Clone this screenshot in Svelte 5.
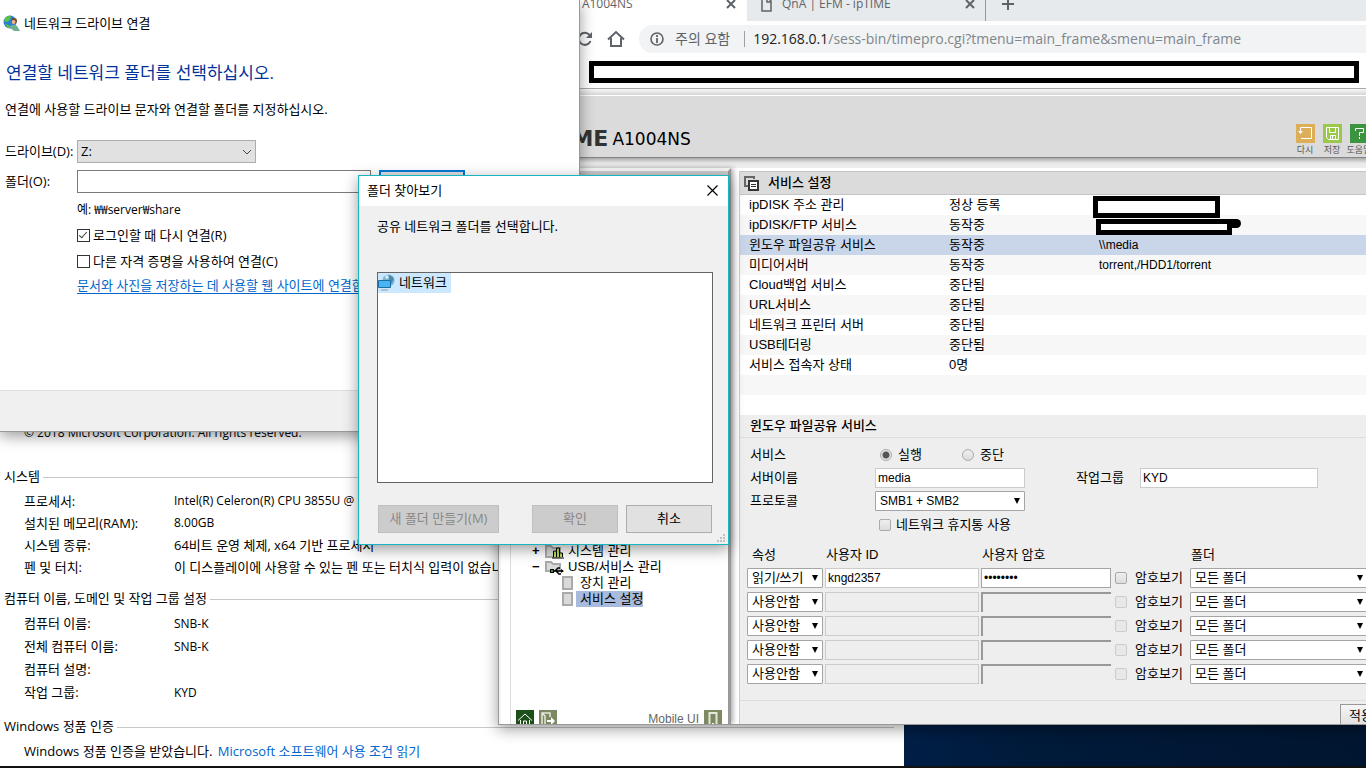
<script lang="ts">
    const systemRows = [
        { label: '프로세서:', value: 'Intel(R) Celeron(R) CPU 3855U @ 1.60GHz', latin: true },
        { label: '설치된 메모리(RAM):', value: '8.00GB', latin: true },
        { label: '시스템 종류:', value: '64비트 운영 체제, x64 기반 프로세서' },
        { label: '펜 및 터치:', value: '이 디스플레이에 사용할 수 있는 펜 또는 터치식 입력이 없습니다.' }
    ];

    const nameRows = [
        { label: '컴퓨터 이름:', value: 'SNB-K' },
        { label: '전체 컴퓨터 이름:', value: 'SNB-K' },
        { label: '컴퓨터 설명:', value: '' },
        { label: '작업 그룹:', value: 'KYD' }
    ];

    const services = [
        { name: 'ipDISK 주소 관리', state: '정상 등록', info: '', mask: 'big' },
        { name: 'ipDISK/FTP 서비스', state: '동작중', info: '', mask: 'small' },
        { name: '윈도우 파일공유 서비스', state: '동작중', info: '\\\\media' },
        { name: '미디어서버', state: '동작중', info: 'torrent,/HDD1/torrent' },
        { name: 'Cloud백업 서비스', state: '중단됨', info: '' },
        { name: 'URL서비스', state: '중단됨', info: '' },
        { name: '네트워크 프린터 서버', state: '중단됨', info: '' },
        { name: 'USB테더링', state: '중단됨', info: '' },
        { name: '서비스 접속자 상태', state: '0명', info: '' },
        { name: '', state: '', info: '' },
        { name: '', state: '', info: '' }
    ];

    const users = [
        { mode: '읽기/쓰기', id: 'kngd2357', pw: 'password' },
        { mode: '사용안함', id: '', pw: '' },
        { mode: '사용안함', id: '', pw: '' },
        { mode: '사용안함', id: '', pw: '' },
        { mode: '사용안함', id: '', pw: '' }
    ];

    let selected = 2;
</script>

<div class="desktop">
    <!-- system information -->
    <section class="window system">
        <p class="copyright">© 2018 Microsoft Corporation. All rights reserved.</p>
        <h2>시스템</h2>
        <dl>
            {#each systemRows as row}
                <div class="row">
                    <dt>{row.label}</dt>
                    <dd class:latin={row.latin}>{row.value}</dd>
                </div>
            {/each}
        </dl>
        <h2>컴퓨터 이름, 도메인 및 작업 그룹 설정</h2>
        <dl class="names">
            {#each nameRows as row}
                <div class="row">
                    <dt>{row.label}</dt>
                    <dd class="latin">{row.value}</dd>
                </div>
            {/each}
        </dl>
        <h2>Windows 정품 인증</h2>
        <p class="activation">Windows 정품 인증을 받았습니다. <a href="#license">Microsoft 소프트웨어 사용 조건 읽기</a></p>
    </section>

    <!-- browser with router page -->
    <section class="window browser">
        <div class="tabs">
            <div class="tab active">
                <span>ipTIME A1004NS</span>
                <button class="icon" aria-label="탭 닫기">
                    <svg width="10" height="10" viewBox="0 0 10 10"><path d="M1 1l8 8M9 1l-8 8" stroke="#5f6368" stroke-width="2" /></svg>
                </button>
            </div>
            <div class="tab other">
                <svg width="11" height="15" viewBox="0 0 11 15"><path d="M1 1h6l3 3v10H1zM6 1v4h4" fill="none" stroke="#5f6368" stroke-width="1.5" /></svg>
                <span>QnA | EFM - ipTIME</span>
                <button class="icon" aria-label="탭 닫기">
                    <svg width="10" height="10" viewBox="0 0 10 10"><path d="M1 1l8 8M9 1l-8 8" stroke="#5f6368" stroke-width="2" /></svg>
                </button>
            </div>
            <button class="icon new" aria-label="새 탭">
                <svg width="12" height="12" viewBox="0 0 12 12"><path d="M6 0v12M0 6h12" stroke="#5f6368" stroke-width="2" /></svg>
            </button>
        </div>
        <div class="toolbar">
            <button class="icon" aria-label="새로고침">
                <svg width="16" height="16" viewBox="0 0 16 16"><path d="M13.5 10A6 6 0 1 1 12.5 4" fill="none" stroke="#5f6368" stroke-width="2" /><path d="M15 1v6H9z" fill="#5f6368" /></svg>
            </button>
            <button class="icon" aria-label="홈">
                <svg width="18" height="18" viewBox="0 0 18 18"><path d="M1 9.500L9 2l8 7.500M4 8v8h10V8" fill="none" stroke="#5f6368" stroke-width="2" /></svg>
            </button>
            <div class="address">
                <svg width="14" height="14" viewBox="0 0 14 14"><circle cx="7" cy="7" r="6" fill="none" stroke="#5f6368" stroke-width="1.600" /><path d="M7 6v5M7 3v2" stroke="#5f6368" stroke-width="1.800" /></svg>
                <span class="warn">주의 요함</span>
                <span class="bar"></span>
                <span class="url"><b>192.168.0.1</b>/sess-bin/timepro.cgi?tmenu=main_frame&amp;smenu=main_frame</span>
            </div>
        </div>
        <div class="bookmarks"><div class="redacted"></div></div>

        <header class="banner">
            <div class="logo"><strong>ipTIME</strong><span>A1004NS</span></div>
            <nav class="tools">
                <button>
                    <svg width="19" height="19" viewBox="0 0 19 19"><path fill="#dcae58" d="M0 0h19v19H0z" /><path d="M4.500 7.500V3.500H15.500V14.500H5" fill="none" stroke="#fff" /><path d="M2 7h5l-2.500 3z" fill="#fff" /></svg>
                    다시
                </button>
                <button>
                    <svg width="19" height="19" viewBox="0 0 19 19"><path fill="#9ac84a" d="M0 0h19v19H0z" /><path d="M3.500 3.500h12v12h-10l-2-2zM6.500 3.500v5h6v-5M7.500 15.500v-4h5v4M9.500 12v3" fill="none" stroke="#fff" /></svg>
                    저장
                </button>
                <button>
                    <svg width="19" height="19" viewBox="0 0 19 19"><path fill="#3c9440" d="M0 0h19v19H0z" /><path d="M5.500 7V4.500h8v4h-4V12M9.500 13v2" fill="none" stroke="#fff" /></svg>
                    도움말
                </button>
            </nav>
        </header>

        <div class="frames">
            <aside>
                <ul class="tree">
                    <li>
                        <span class="sign">+</span>
                        <svg width="19" height="15" viewBox="0 0 19 15"><path d="M1 13V2h5l2 2h7v9z" fill="#dadada" stroke="#aaa" stroke-width="2" /><path d="M8.500 13V7h3v6M11.500 13V4h3v9M14.500 13V9h3v4M7 14h12" fill="#b8dc50" stroke="#000" /></svg>
                        <a href="#system">시스템 관리</a>
                    </li>
                    <li>
                        <span class="sign">−</span>
                        <svg width="19" height="15" viewBox="0 0 19 15"><path d="M1 11V2h5l2 2h7v7z" fill="#dadada" stroke="#aaa" stroke-width="2" /><path d="M5 9h4v4H5z" fill="#000" /><path d="M6 10h2v2H6z" fill="#3c9440" /><path d="M8 11h10M10 11l3-3h2M11 11l3 3h2" stroke="#000" stroke-width="1.500" fill="none" /><path d="M16 9v4l3-2z" /></svg>
                        <a href="#usb">USB/서비스 관리</a>
                    </li>
                    <li class="child">
                        <svg width="11" height="14" viewBox="0 0 11 14"><path d="M1 1h9v12H1z" fill="#dadada" stroke="#aaa" stroke-width="2" /></svg>
                        <a href="#device">장치 관리</a>
                    </li>
                    <li class="child">
                        <svg width="11" height="14" viewBox="0 0 11 14"><path d="M1 1h9v12H1z" fill="#dadada" stroke="#aaa" stroke-width="2" /></svg>
                        <a href="#service" class="current">서비스 설정</a>
                    </li>
                </ul>
                <div class="side-foot">
                    <svg width="18" height="18" viewBox="0 0 18 18"><path fill="#1c5018" d="M0 0h18v18H0z" /><path d="M2 10.500L9 4l7 6.500M4.500 10v7M13.500 10v7M7.500 17v-6h3v6" fill="none" stroke="#fff" /></svg>
                    <svg width="18" height="18" viewBox="0 0 18 18"><path fill="#7d8963" d="M0 0h18v18H0z" /><path d="M11 7V3H3v11l3 3V6L3 3" fill="none" stroke="#e4e8d8" stroke-width="1.500" /><path d="M8 10h4V7l4 4-4 4v-3H8z" fill="#fff" /></svg>
                    <a href="#mobile">Mobile UI</a>
                    <svg width="18" height="18" viewBox="0 0 18 18"><path fill="#7d8963" d="M0 0h18v18H0z" /><path d="M5.500 3h7v13h-7z" fill="none" stroke="#e4e8d8" stroke-width="2" /><path d="M8 13h2v2H8z" fill="#fff" /></svg>
                </div>
            </aside>

            <main>
                <h1>
                    <svg width="15" height="15" viewBox="0 0 15 15"><path d="M4 10H1V1h9v2" fill="none" stroke="#666" stroke-width="2" /><path d="M5 5h9v9H5z" fill="#fff" stroke="#333" stroke-width="2" /><path d="M7 8.500h5M7 10.500h5" stroke="#333" /></svg>
                    서비스 설정
                </h1>
                <table class="services">
                    <tbody>
                        {#each services as service, i}
                            <tr class:selected={i === selected} on:click={() => (selected = i)}>
                                <td class="name">{service.name}</td>
                                <td class="state">{service.state}</td>
                                <td class="info">
                                    {service.info}
                                    {#if service.mask}<span class="mask {service.mask}"></span>{/if}
                                </td>
                            </tr>
                        {/each}
                    </tbody>
                </table>

                <h3>윈도우 파일공유 서비스</h3>
                <form class="settings">
                    <div class="line radios">
                        <span class="key">서비스</span>
                        <label><input type="radio" name="run" checked />실행</label>
                        <label><input type="radio" name="run" />중단</label>
                    </div>
                    <div class="line">
                        <label class="key" for="server">서버이름</label>
                        <input id="server" class="text server" value="media" />
                        <label class="group-key" for="group">작업그룹</label>
                        <input id="group" class="text group" value="KYD" />
                    </div>
                    <div class="line">
                        <label class="key" for="proto">프로토콜</label>
                        <span class="select proto">
                            <select id="proto"><option>SMB1 + SMB2</option></select>
                        </span>
                    </div>
                    <div class="line trash">
                        <label><input type="checkbox" />네트워크 휴지통 사용</label>
                    </div>
                </form>

                <table class="users">
                    <thead>
                        <tr>
                            <th class="c-mode">속성</th>
                            <th class="c-id">사용자 ID</th>
                            <th class="c-pw">사용자 암호</th>
                            <th class="c-show"></th>
                            <th class="c-folder">폴더</th>
                        </tr>
                    </thead>
                    <tbody>
                        {#each users as user}
                            <tr>
                                <td><span class="select mode"><select aria-label="속성"><option>{user.mode}</option></select></span></td>
                                <td><input class="text uid" aria-label="사용자 ID" value={user.id} disabled={!user.id} /></td>
                                <td><input class="text pw" type="password" aria-label="사용자 암호" value={user.pw} disabled={!user.id} /></td>
                                <td><label class="show"><input type="checkbox" disabled={!user.id} />암호보기</label></td>
                                <td><span class="select folder"><select aria-label="폴더"><option>모든 폴더</option></select></span></td>
                            </tr>
                        {/each}
                    </tbody>
                </table>
                <div class="apply"><button>적용</button></div>
            </main>
        </div>
    </section>

    <!-- map network drive -->
    <section class="window drive">
        <div class="drive-title">
            <svg width="17" height="17" viewBox="0 0 17 17">
                <circle cx="7" cy="7" r="6.500" fill="#2a7fd4" />
                <path d="M2 3q3-3 6-2l-1 4-3 2-3-1zM2 9l4 1 1 3-2 0z" fill="#5cc04a" />
                <circle cx="11" cy="6" r="3" fill="#7a4a2a" /><circle cx="10.500" cy="7" r="2" fill="#e8b890" />
                <path d="M6 12q4-4 8-1l3 5h-6z" fill="#6fae90" />
            </svg>
            <span>네트워크 드라이브 연결</span>
        </div>
        <h1>연결할 네트워크 폴더를 선택하십시오.</h1>
        <p>연결에 사용할 드라이브 문자와 연결할 폴더를 지정하십시오.</p>
        <div class="field">
            <label for="letter">드라이브(D):</label>
            <span class="letter">
                <select id="letter"><option>Z:</option></select>
                <svg width="10" height="6" viewBox="0 0 10 6"><path d="M1 1l4 4 4-4" fill="none" stroke="#444" /></svg>
            </span>
        </div>
        <div class="field">
            <label for="folder">폴더(O):</label>
            <input id="folder" class="path" />
            <button class="browse" aria-label="찾아보기"></button>
        </div>
        <div class="options">
            <span class="sample">예: ₩₩server₩share</span>
            <label><input type="checkbox" checked />로그인할 때 다시 연결(R)</label>
            <label><input type="checkbox" />다른 자격 증명을 사용하여 연결(C)</label>
            <a href="#website">문서와 사진을 저장하는 데 사용할 웹 사이트에 연결합니다.</a>
        </div>
        <footer></footer>
    </section>

    <!-- browse for folder -->
    <section class="window dialog">
        <div class="dialog-title">
            <span>폴더 찾아보기</span>
            <button class="icon" aria-label="닫기">
                <svg width="11" height="11" viewBox="0 0 11 11"><path d="M.5 .5l10 10M10.500 .5l-10 10" stroke="#000" stroke-width="1.200" /></svg>
            </button>
        </div>
        <p>공유 네트워크 폴더를 선택합니다.</p>
        <div class="folders">
            <button class="node">
                <svg width="17" height="17" viewBox="0 0 17 17">
                    <circle cx="10.500" cy="6.500" r="6" fill="#7fb4d0" /><path d="M9 1q5 0 7 4l-3 5-3-2 1-3z" fill="#4a8cae" /><path d="M7 2l3-1 1 3-3 1z" fill="#d5ebf2" />
                    <path d="M.5 6.500h12v7H.5z" fill="#48b4f4" stroke="#1d6fa8" /><path d="M3 16h7" stroke="#999" />
                </svg>
                네트워크
            </button>
        </div>
        <div class="buttons">
            <button class="make" disabled>새 폴더 만들기(M)</button>
            <button disabled>확인</button>
            <button>취소</button>
        </div>
        <svg class="grip" width="8" height="8" viewBox="0 0 8 8"><path d="M6 0h2v2H6zM3 3h2v2H3zM6 3h2v2H6zM0 6h2v2H0zM3 6h2v2H3zM6 6h2v2H6z" fill="#bfbfbf" /></svg>
    </section>

    <div class="taskbar"></div>
</div>

<style>
    :global(body) {
        margin: 0;
        overflow: hidden;
    }

    .desktop {
        position: relative;
        height: 100vh;
        overflow: hidden;
        background: linear-gradient(100deg, #00204a 66%, #001a3a 78%, #001630 100%);
        font: 13px/20px "Open Sans", "Noto Sans CJK KR", sans-serif;
        color: #000;
    }

    .desktop :is(h1, h2, h3, p, ul, dl, dd) {
        margin: 0;
        padding: 0;
        font-weight: 400;
        list-style: none;
    }

    .desktop :is(button, input, select) {
        box-sizing: border-box;
        margin: 0;
        font: inherit;
        color: inherit;
    }

    .window {
        position: absolute;
        box-sizing: border-box;
        display: flex;
        flex-direction: column;
        white-space: nowrap;
        overflow: hidden;
    }

    svg {
        flex: none;
        display: block;
    }

    .icon {
        display: flex;
        padding: 0;
        border: 0;
        background: none;
    }

    a {
        color: #0066cc;
        text-decoration: none;
    }

    .taskbar {
        position: absolute;
        inset: auto 0 0;
        height: 2px;
        background: #111;
    }

    /* system information */
    .system {
        left: 0;
        top: 0;
        bottom: 2px;
        width: 904px;
        padding: 0 10px 4px 4px;
        justify-content: flex-end;
        background: #fff;
        line-height: 22px;
    }

    .system .copyright {
        margin-bottom: 20px;
        padding-left: 20px;
        font-size: 12px;
    }

    .system h2 {
        display: flex;
        align-items: center;
        gap: 3px;
        height: 24px;
        margin-bottom: 2px;
        font-size: 13px;
    }

    .system h2::after {
        content: "";
        flex: 1;
        height: 1px;
        margin-top: 2px;
        background: #c8c8c8;
    }

    .system dl {
        margin-bottom: 8px;
    }

    .row {
        display: flex;
        padding-left: 20px;
    }

    .system .names {
        margin-bottom: 10px;
        line-height: 23px;
    }

    dt {
        width: 150px;
    }

    .latin {
        font-size: 12px;
    }

    .system .activation {
        padding-left: 20px;
    }

    .activation a {
        margin-left: 2px;
    }

    /* browser */
    .browser {
        left: 498px;
        right: 0;
        top: 0;
        bottom: 43px;
        border: solid #999;
        border-width: 0 0 1px 1px;
        background: #fff;
        box-shadow: 0 4px 14px rgba(0, 0, 0, 0.4);
    }

    .tabs {
        display: flex;
        align-items: center;
        height: 21px;
        flex: none;
        background: #e6eaed;
        font-size: 12px;
        color: #5f6368;
    }

    .tab {
        display: flex;
        align-items: center;
        box-sizing: border-box;
        height: 21px;
        padding-bottom: 13px;
    }

    .tab .icon {
        margin-left: auto;
    }

    .active {
        width: 248px;
        padding-left: 42px;
        padding-right: 11px;
        background: #fff;
    }

    .other {
        width: 239px;
        padding-left: 14px;
        padding-right: 10px;
        gap: 10px;
        background: #e6eaed;
        border-bottom-left-radius: 8px;
        border-right: 1px solid #999;
    }

    .tabs .new {
        margin: 0 0 13px 16px;
    }

    .toolbar {
        display: flex;
        align-items: center;
        gap: 14px;
        height: 36px;
        flex: none;
        padding-left: 78px;
    }

    .address {
        display: flex;
        align-items: center;
        flex: 1;
        height: 28px;
        padding-left: 11px;
        border-radius: 14px 0 0 14px;
        background: #f1f3f4;
        color: #80868b;
        font-size: 14px;
    }

    .warn {
        margin-left: 11px;
        color: #5f6368;
    }

    .bar {
        width: 1px;
        height: 16px;
        margin: 0 8px 0 14px;
        background: #9aa0a6;
    }

    .url b {
        font-weight: 400;
        color: #202124;
    }

    .bookmarks {
        height: 27px;
        flex: none;
        padding: 4px 7px 0 90px;
        border-bottom: 1px solid #aaa;
    }

    .redacted {
        height: 12px;
        border: 5px solid #000;
    }

    .banner {
        display: flex;
        flex: none;
        box-sizing: border-box;
        height: 69px;
        border-bottom: 1px solid #858585;
        background: linear-gradient(#f8f8f8, #d5d5d5 6px, #fff 6px, #fff 7px, #dbdbdb 7px);
        overflow: hidden;
    }

    .logo {
        display: flex;
        align-items: center;
        gap: 4px;
        padding-left: 26px;
        padding-top: 31px;
        font-family: "DejaVu Sans", sans-serif;
        font-size: 17px;
    }

    .logo strong {
        font-size: 22px;
        color: #333;
    }

    .tools {
        display: flex;
        gap: 7px;
        margin: 35px -3px 0 auto;
        color: #555;
    }

    .tools button {
        display: flex;
        flex-direction: column;
        align-items: center;
        width: 20px;
        padding: 0;
        border: 0;
        background: none;
        font-size: 9px;
        line-height: 13px;
    }

    .frames {
        display: flex;
        flex: 1;
        min-height: 0;
        padding-top: 10px;
        background: linear-gradient(#aaa, #e8e8e8 5px, #eee 10px, #fff 10px);
        font-family: "Liberation Sans", "Noto Sans CJK KR", sans-serif;
    }

    aside {
        display: flex;
        flex-direction: column;
        justify-content: flex-end;
        flex: none;
        box-sizing: border-box;
        width: 232px;
        margin-right: 8px;
        border: solid #f4f4f4;
        border-width: 3px 3px 0 2px;
        border-right-color: #999;
        padding: 0 6px 0 25px;
        background: linear-gradient(#ccc, #ccc 8px, transparent 8px), linear-gradient(90deg, #fff 9px, #ddd 9px, #ddd 10px, #fff 10px);
        box-shadow: 2px 0 5px #aaa;
    }

    .tree li {
        display: flex;
        align-items: center;
        height: 16px;
        line-height: 16px;
    }

    .tree a {
        padding: 0 0 0 4px;
        color: #000;
    }

    .tree .current {
        background: #a9bbdc;
    }

    .sign {
        width: 19px;
        padding-left: 6px;
        box-sizing: border-box;
        font-weight: 700;
    }

    .tree .child {
        padding-left: 36px;
        gap: 3px;
    }

    .side-foot {
        display: flex;
        align-items: center;
        gap: 5px;
        height: 18px;
        margin: 103px 0 -4px -10px;
        font-size: 12px;
    }

    .side-foot a {
        margin-left: auto;
        color: #666;
    }

    main {
        flex: 1;
        min-width: 0;
        border-left: 1px solid #ccc;
        margin-top: 3px;
        background: #eee;
        overflow: hidden;
    }

    .desktop main h1 {
        display: flex;
        align-items: center;
        gap: 9px;
        box-sizing: border-box;
        height: 24px;
        padding-left: 4px;
        border: solid #c4c4c4;
        border-width: 1px 0;
        background: #dbdbdb;
        font-size: 13px;
    }

    .desktop main :is(h1, h3) {
        font-weight: 500;
    }

    table {
        border-collapse: collapse;
    }

    td,
    th {
        padding: 0;
        font-weight: 400;
        text-align: left;
    }

    .services {
        width: 100%;
        table-layout: fixed;
    }

    .services tr {
        height: 20px;
        background: #fff;
    }

    .services tr:nth-child(even) {
        background: #f7f7f7;
    }

    .services tr.selected {
        background: #c9d5e9;
    }

    .services .name {
        width: 200px;
        padding-left: 9px;
    }

    .services .state {
        width: 150px;
    }

    .info {
        position: relative;
        font-size: 12px;
    }

    .mask {
        position: absolute;
        z-index: 1;
        border: 5px solid #000;
        background: #fff;
    }

    .mask.big {
        left: -6px;
        top: 1px;
        width: 117px;
        height: 12px;
    }

    .mask.small {
        left: -3px;
        top: 4px;
        width: 126px;
        height: 6px;
    }

    .mask.small::after {
        content: "";
        position: absolute;
        left: 126px;
        top: -5px;
        width: 14px;
        height: 9px;
        border-radius: 0 5px 5px 0;
        background: #000;
    }

    .desktop main h3 {
        height: 22px;
        padding-left: 10px;
        border-bottom: 1px solid #ddd;
        font-size: 13px;
        line-height: 22px;
    }

    .settings {
        padding: 5px 0 0 10px;
    }

    .line {
        display: flex;
        align-items: center;
        height: 23px;
    }

    .key {
        width: 125px;
    }

    .radios label {
        display: flex;
        align-items: center;
        gap: 6px;
        width: 82px;
    }

    .radios .key {
        width: 130px;
    }

    .text {
        height: 20px;
        padding: 0 2px;
        border: 1px solid #ccc;
        background: #fff;
    }

    .desktop .text {
        font-size: 12px;
    }

    .text:disabled {
        background: #eee;
    }

    .server {
        width: 150px;
    }

    .group-key {
        width: 64px;
        margin-left: 51px;
    }

    .group {
        width: 178px;
    }

    .select {
        position: relative;
        display: block;
    }

    .select::after {
        content: "";
        position: absolute;
        right: 5px;
        top: 7px;
        border: solid transparent;
        border-width: 6px 3px 0;
        border-top-color: #000;
        pointer-events: none;
    }

    .select select {
        display: block;
        width: 100%;
        height: 20px;
        padding: 0 4px;
        border: 1px solid #a5a5a5;
        border-radius: 1px;
        background: #fff;
        line-height: 18px;
        appearance: none;
    }

    .proto {
        width: 150px;
    }

    .desktop .proto select {
        font-size: 12px;
    }

    .mode {
        width: 76px;
    }

    .folder {
        width: 178px;
    }

    .browser input[type="checkbox"],
    .browser input[type="radio"] {
        appearance: none;
        width: 12px;
        height: 12px;
        border: 1px solid #aaa;
        border-radius: 2px;
        background: linear-gradient(#eee, #ddd);
    }

    .browser input[type="radio"] {
        border-radius: 50%;
    }

    .browser input[type="radio"]:checked {
        background: radial-gradient(#555 3px, #e6e6e6 4px);
    }

    .browser input[type="checkbox"]:disabled {
        border-color: #ccc;
        background: #e8e8e8;
    }

    .trash label {
        display: flex;
        align-items: center;
        gap: 5px;
        padding: 3px 0 0 129px;
    }

    .users {
        table-layout: fixed;
        width: 622px;
        margin: 9px 0 0 7px;
    }

    .users th {
        height: 22px;
        padding: 0 0 0 1px;
    }

    .users .c-mode {
        width: 73px;
        padding-left: 5px;
    }

    .c-id {
        width: 155px;
    }

    .c-pw {
        width: 133px;
    }

    .c-show {
        width: 74px;
    }

    .users td {
        height: 24px;
    }

    .uid {
        display: block;
        width: 154px;
    }

    .pw {
        display: block;
        width: 130px;
        border-color: #a5a5a5;
    }

    .pw:disabled {
        border-width: 2px 0 0 2px;
        border-color: #999;
    }

    .show {
        display: flex;
        align-items: center;
        gap: 8px;
    }

    .apply {
        display: flex;
        justify-content: flex-end;
        margin-top: 14px;
        padding-top: 3px;
        border-top: 1px solid #ddd;
    }

    .apply button {
        width: 46px;
        height: 24px;
        margin-right: -20px;
        padding: 0 8px;
        border: 1px solid #999;
        background: linear-gradient(#f6f6f6, #ddd);
        text-align: left;
    }

    /* map network drive */
    .drive {
        left: 0;
        top: 0;
        width: 580px;
        height: 432px;
        padding-top: 12px;
        border: solid #999;
        border-width: 0 1px 1px 0;
        background: #fff;
        box-shadow: 0 4px 14px rgba(0, 0, 0, 0.4);
    }

    .drive-title {
        display: flex;
        align-items: center;
        gap: 4px;
        height: 22px;
        padding-left: 3px;
    }

    .desktop .drive h1 {
        margin-top: 28px;
        padding-left: 6px;
        font-size: 17px;
        line-height: 22px;
        color: #003399;
    }

    .desktop .drive p {
        margin: 15px 0 20px;
        padding-left: 5px;
    }

    .field {
        display: flex;
        align-items: center;
        height: 24px;
        margin-bottom: 6px;
        padding-left: 5px;
    }

    .field label {
        width: 72px;
    }

    .letter {
        position: relative;
    }

    .letter select {
        display: block;
        width: 179px;
        height: 23px;
        padding: 0 3px;
        border: 1px solid #adadad;
        background: #e1e1e1;
        appearance: none;
    }

    .letter svg {
        position: absolute;
        right: 4px;
        top: 9px;
    }

    .path {
        width: 294px;
        height: 23px;
        border: 1px solid #7a7a7a;
        background: #fff;
    }

    .field .browse {
        width: 86px;
        height: 23px;
        margin-left: 8px;
        padding: 0;
        border: 2px solid #0078d7;
        background: #e1e1e1;
    }

    .options {
        display: flex;
        flex-direction: column;
        align-items: flex-start;
        gap: 6px;
        padding-left: 77px;
        margin-top: 2px;
    }

    .options label {
        display: flex;
        align-items: center;
        gap: 3px;
    }

    .options .sample {
        font-size: 12px;
        line-height: 18px;
    }

    .options a {
        border-bottom: 1px solid #0066cc;
        line-height: 16px;
    }

    .options input {
        position: relative;
        appearance: none;
        width: 13px;
        height: 13px;
        border: 1px solid #333;
        background: #fff;
    }

    .options input:checked::after {
        content: "";
        position: absolute;
        left: 3px;
        top: 0;
        width: 3px;
        height: 7px;
        border: solid #333;
        border-width: 0 1px 1px 0;
        transform: rotate(42deg);
    }

    .drive footer {
        height: 40px;
        margin-top: auto;
        border-top: 1px solid #dfdfdf;
        background: #f0f0f0;
    }

    /* browse for folder */
    .dialog {
        left: 358px;
        top: 175px;
        width: 371px;
        height: 370px;
        border: 1px solid #18b4c0;
        background: #f0f0f0;
        box-shadow: 0 4px 14px rgba(0, 0, 0, 0.4);
    }

    .dialog-title {
        display: flex;
        align-items: center;
        justify-content: space-between;
        height: 28px;
        padding: 0 10px 2px 8px;
        background: #fff;
    }

    .desktop .dialog p {
        margin: 10px 18px 36px;
    }

    .folders {
        height: 209px;
        margin: 0 15px 0 18px;
        border: 1px solid #646464;
        background: #fff;
    }

    .node {
        display: flex;
        align-items: center;
        gap: 4px;
        height: 20px;
        padding: 0 4px 2px 0;
        border: 0;
        background: #cce8ff;
    }

    .buttons {
        display: flex;
        gap: 8px;
        margin: 22px 16px 0 19px;
    }

    .buttons button {
        width: 86px;
        height: 28px;
        padding: 0 0 2px;
        border: 1px solid #adadad;
        background: #e1e1e1;
    }

    .buttons .make {
        width: 121px;
        margin-right: auto;
    }

    .buttons button:disabled {
        border-color: #bfbfbf;
        background: #ccc;
        color: #888;
    }

    .grip {
        position: absolute;
        right: 3px;
        bottom: 2px;
    }
</style>
